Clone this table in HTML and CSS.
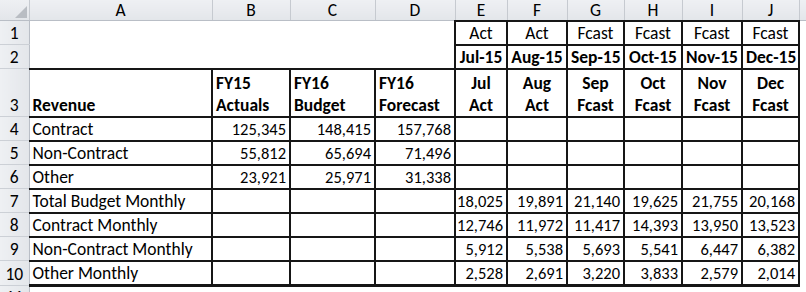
FILE: index.html
```
<!DOCTYPE html>
<html>
<head>
<meta charset="utf-8">
<link rel="stylesheet" href="styles.css">
</head>
<body>
<table class="sheet">
<colgroup>
<col class="c-rh"><col class="c-a"><col class="c-b"><col class="c-c"><col class="c-d"><col class="c-e"><col class="c-f"><col class="c-g"><col class="c-h"><col class="c-i"><col class="c-j"><col class="c-k">
</colgroup>
<tr class="hdr">
<th class="corner"><svg width="14" height="14" viewBox="0 0 14 14"><polygon points="14,2 14,14 2,14" fill="#b9bdc3"/></svg></th>
<th>A</th><th>B</th><th>C</th><th>D</th><th>E</th><th>F</th><th>G</th><th>H</th><th>I</th><th>J</th><th class="last"></th>
</tr>
<tr class="r">
<th class="rn">1</th>
<td></td><td></td><td></td><td></td>
<td class="b ctr">Act</td><td class="b ctr">Act</td><td class="b ctr">Fcast</td><td class="b ctr">Fcast</td><td class="b ctr">Fcast</td><td class="b ctr">Fcast</td><td></td>
</tr>
<tr class="r">
<th class="rn">2</th>
<td></td><td></td><td></td><td></td>
<td class="b ctr bold">Jul-15</td><td class="b ctr bold">Aug-15</td><td class="b ctr bold">Sep-15</td><td class="b ctr bold">Oct-15</td><td class="b ctr bold">Nov-15</td><td class="b ctr bold">Dec-15</td><td></td>
</tr>
<tr class="r3">
<th class="rn">3</th>
<td class="b nl bold">Revenue</td>
<td class="b bold">FY15<br>Actuals</td><td class="b bold">FY16<br>Budget</td><td class="b bold">FY16<br>Forecast</td>
<td class="b ctr bold">Jul<br>Act</td><td class="b ctr bold">Aug<br>Act</td><td class="b ctr bold">Sep<br>Fcast</td><td class="b ctr bold">Oct<br>Fcast</td><td class="b ctr bold">Nov<br>Fcast</td><td class="b ctr bold">Dec<br>Fcast</td><td></td>
</tr>
<tr class="r">
<th class="rn">4</th>
<td class="b nl">Contract</td><td class="b num">125,345</td><td class="b num">148,415</td><td class="b num">157,768</td>
<td class="b"></td><td class="b"></td><td class="b"></td><td class="b"></td><td class="b"></td><td class="b"></td><td></td>
</tr>
<tr class="r">
<th class="rn">5</th>
<td class="b nl">Non-Contract</td><td class="b num">55,812</td><td class="b num">65,694</td><td class="b num">71,496</td>
<td class="b"></td><td class="b"></td><td class="b"></td><td class="b"></td><td class="b"></td><td class="b"></td><td></td>
</tr>
<tr class="r">
<th class="rn">6</th>
<td class="b nl">Other</td><td class="b num">23,921</td><td class="b num">25,971</td><td class="b num">31,338</td>
<td class="b"></td><td class="b"></td><td class="b"></td><td class="b"></td><td class="b"></td><td class="b"></td><td></td>
</tr>
<tr class="r">
<th class="rn">7</th>
<td class="b nl">Total Budget Monthly</td><td class="b"></td><td class="b"></td><td class="b"></td>
<td class="b num">18,025</td><td class="b num">19,891</td><td class="b num">21,140</td><td class="b num">19,625</td><td class="b num">21,755</td><td class="b num">20,168</td><td></td>
</tr>
<tr class="r">
<th class="rn">8</th>
<td class="b nl">Contract Monthly</td><td class="b"></td><td class="b"></td><td class="b"></td>
<td class="b num">12,746</td><td class="b num">11,972</td><td class="b num">11,417</td><td class="b num">14,393</td><td class="b num">13,950</td><td class="b num">13,523</td><td></td>
</tr>
<tr class="r">
<th class="rn">9</th>
<td class="b nl">Non-Contract Monthly</td><td class="b"></td><td class="b"></td><td class="b"></td>
<td class="b num">5,912</td><td class="b num">5,538</td><td class="b num">5,693</td><td class="b num">5,541</td><td class="b num">6,447</td><td class="b num">6,382</td><td></td>
</tr>
<tr class="r lastrow">
<th class="rn">10</th>
<td class="b nl">Other Monthly</td><td class="b"></td><td class="b"></td><td class="b"></td>
<td class="b num">2,528</td><td class="b num">2,691</td><td class="b num">3,220</td><td class="b num">3,833</td><td class="b num">2,579</td><td class="b num">2,014</td><td></td>
</tr>
<tr class="r">
<th class="rn">11</th>
<td></td><td></td><td></td><td></td><td></td><td></td><td></td><td></td><td></td><td></td><td></td>
</tr>
</table>
</body>
</html>
```
FILE: styles.css
```
html, body {
  margin: 0;
  padding: 0;
  background: #fff;
  overflow: hidden;
}
body {
  width: 806px;
  height: 292px;
  font-family: Carlito, Lato, "Open Sans", sans-serif;
  font-size: 17.5px;
  color: #000;
}
.sheet {
  border-collapse: collapse;
  table-layout: fixed;
  width: 830px;
}
.c-rh { width: 29px; }
.c-a { width: 183px; }
.c-b { width: 78px; }
.c-c { width: 85px; }
.c-d { width: 80px; }
.c-e { width: 52px; }
.c-f { width: 60px; }
.c-g { width: 57px; }
.c-h { width: 58px; }
.c-i { width: 60px; }
.c-j { width: 57px; }
.c-k { width: 33px; }

.sheet td, .sheet th {
  padding: 0 3px;
  white-space: nowrap;
  overflow: hidden;
  vertical-align: bottom;
  line-height: 22px;
}
.hdr th {
  height: 18px;
  background: linear-gradient(#eef0f3, #e3e6ea);
  border-right: 1px solid #c6cad0;
  border-bottom: 1px solid #b9bec6;
  font-weight: normal;
  text-align: center;
  vertical-align: middle;
  line-height: 18px;
  padding: 0;
}
.hdr th.corner {
  text-align: right;
  vertical-align: bottom;
  padding: 0 2px 2px 0;
  line-height: 0;
}
.rn {
  background: linear-gradient(90deg, #eef0f3, #e3e6ea);
  border-right: 1px solid #b9bec6;
  border-bottom: 1px solid #ccd0d6;
  font-weight: normal;
  text-align: center;
  padding: 0 !important;
}
.r td, .r th { height: 22px; }
.r3 td, .r3 th { height: 46px; }
.b {
  border: 2px solid #161616;
}
.b.nl { border-left: 0; }
.lastrow .b { border-bottom-width: 3px; }
.ctr { text-align: center; }
.bold { font-weight: bold; }
.num {
  text-align: right;
  font-size: 16.5px;
}
.sheet td.num { padding-right: 3px; padding-left: 0; }
```
